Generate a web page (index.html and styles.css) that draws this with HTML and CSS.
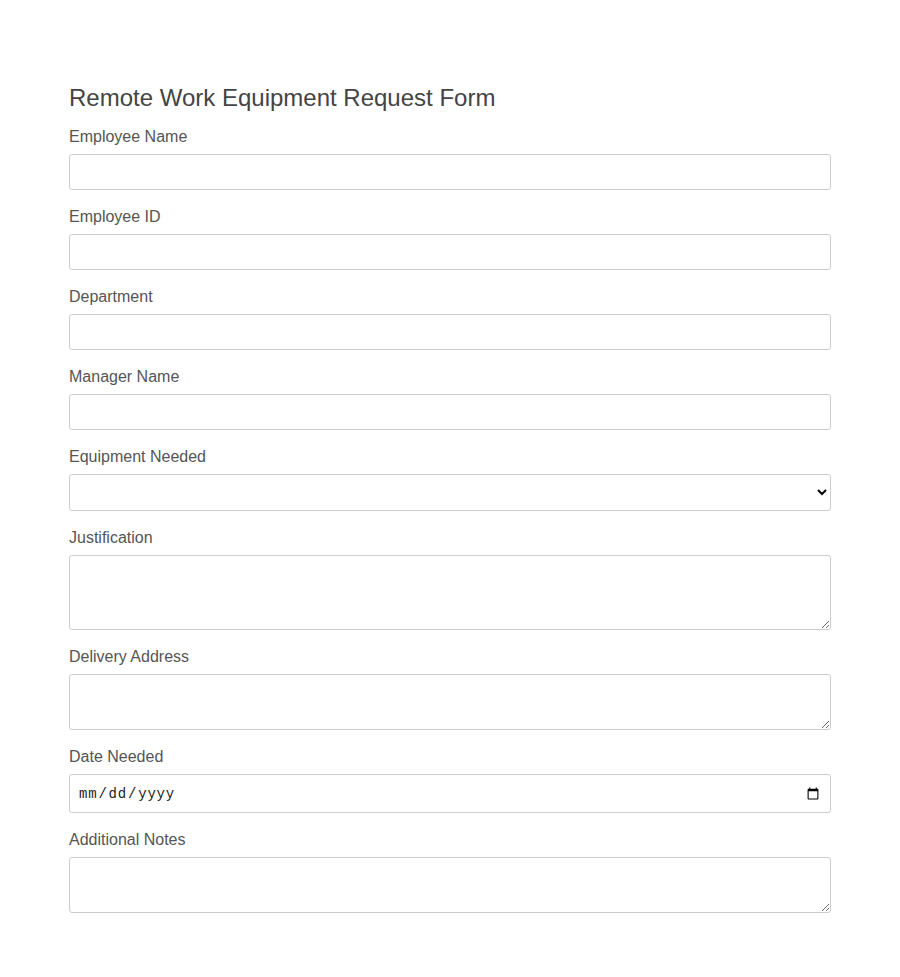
FILE: index.html
```html
<!DOCTYPE html>
<html lang="en">
<head>
<meta charset="utf-8">
<title>Remote Work Equipment Request Form</title>
<link rel="stylesheet" href="styles.css">
</head>
<body>
<div class="container">
  <h2 class="title">Remote Work Equipment Request Form</h2>
  <form class="form">
    <div class="field">
      <label class="label" for="name">Employee Name</label>
      <input class="control" id="name" type="text">
    </div>
    <div class="field">
      <label class="label" for="eid">Employee ID</label>
      <input class="control" id="eid" type="text">
    </div>
    <div class="field">
      <label class="label" for="dept">Department</label>
      <input class="control" id="dept" type="text">
    </div>
    <div class="field">
      <label class="label" for="mgr">Manager Name</label>
      <input class="control" id="mgr" type="text">
    </div>
    <div class="field">
      <label class="label" for="equip">Equipment Needed</label>
      <select class="control select" id="equip">
        <option value=""></option>
      </select>
    </div>
    <div class="field">
      <label class="label" for="just">Justification</label>
      <textarea class="control area-lg" id="just"></textarea>
    </div>
    <div class="field">
      <label class="label" for="addr">Delivery Address</label>
      <textarea class="control area-sm" id="addr"></textarea>
    </div>
    <div class="field">
      <label class="label" for="date">Date Needed</label>
      <input class="control date" id="date" type="date">
    </div>
    <div class="field">
      <label class="label" for="notes">Additional Notes</label>
      <textarea class="control area-sm" id="notes"></textarea>
    </div>
  </form>
</div>
</body>
</html>
```
FILE: styles.css
```css
html, body {
  margin: 0;
  padding: 0;
  background: #ffffff;
}
body {
  font-family: "Liberation Sans", Arial, sans-serif;
  color: #555555;
}
.container {
  width: 762px;
  margin: 0 auto;
  padding-top: 84px;
}
.title {
  margin: 0 0 15px;
  font-size: 24px;
  line-height: 28px;
  font-weight: normal;
  color: #444444;
}
.form {
  display: flex;
  flex-direction: column;
  gap: 17px;
}
.field {
  display: flex;
  flex-direction: column;
}
.label {
  display: block;
  font-size: 16px;
  line-height: 18px;
  padding-top: 1px;
  margin-bottom: 8px;
  color: #555555;
}
.control {
  box-sizing: border-box;
  width: 100%;
  height: 36px;
  margin: 0;
  padding: 8px;
  border: 1px solid #cccccc;
  border-radius: 3px;
  background: #ffffff;
  font-size: 14px;
}
.select {
  height: 37px;
}
.date {
  height: 39px;
  font-family: "Liberation Mono", monospace;
  font-size: 14px;
  letter-spacing: 0.8px;
  color: #222222;
}
.area-lg {
  height: 75px;
  resize: vertical;
}
.area-sm {
  height: 56px;
  resize: vertical;
}
```
